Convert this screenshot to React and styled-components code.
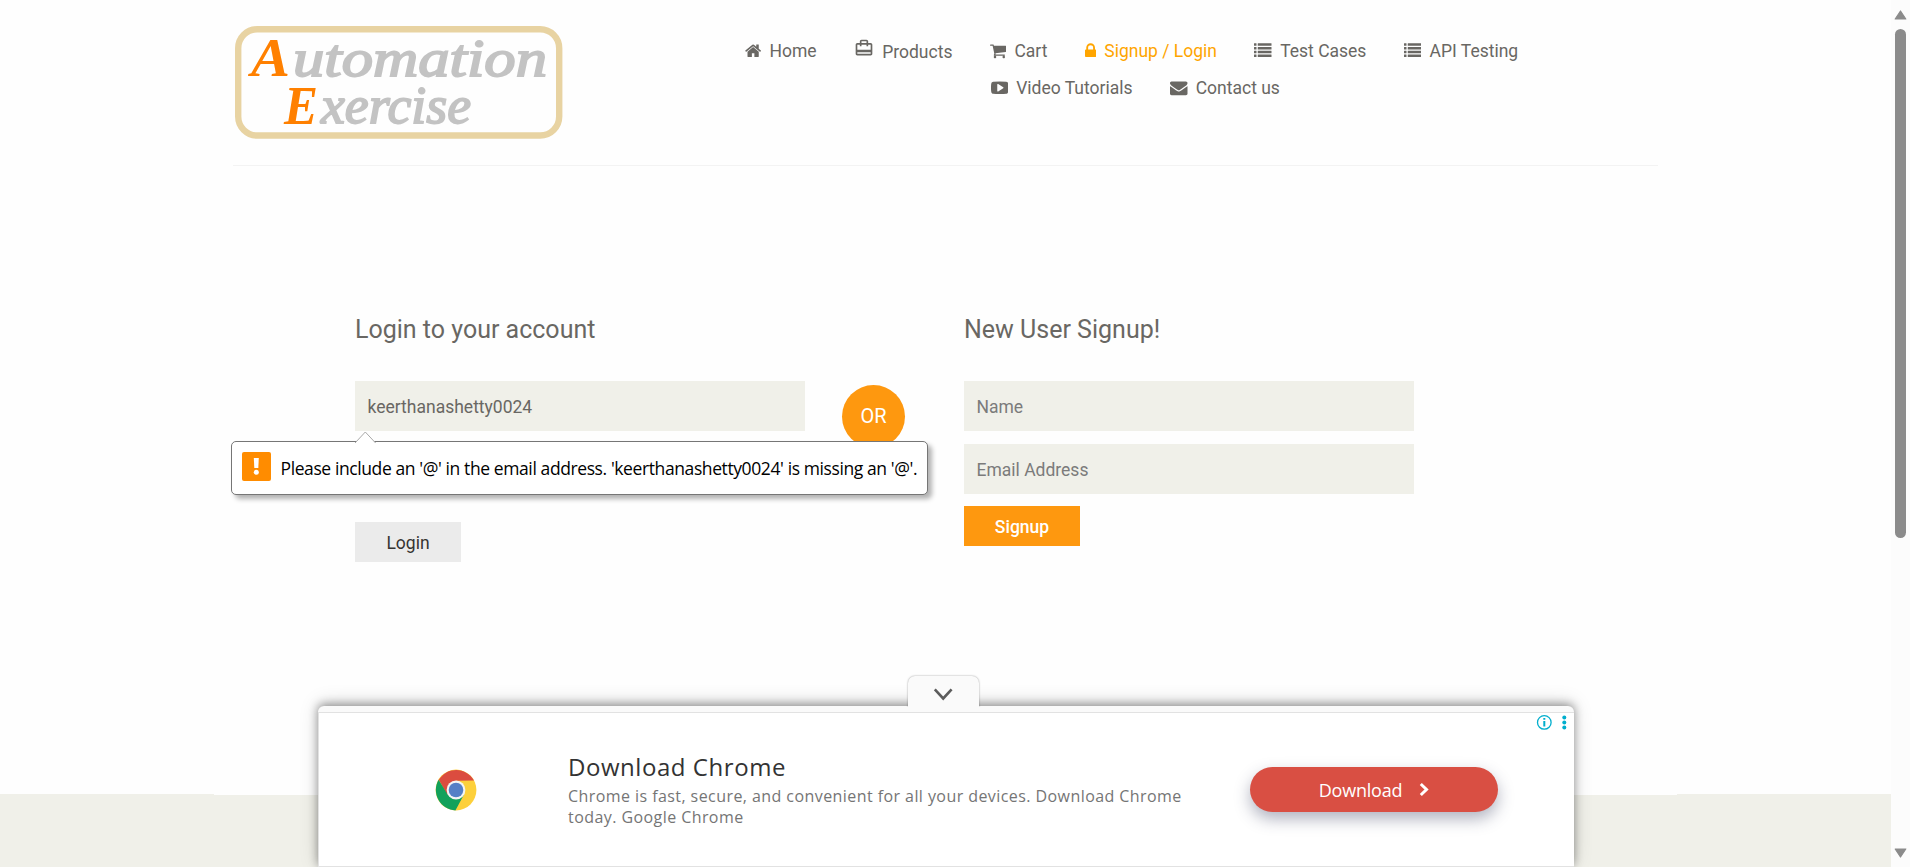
import React from "react";
import styled, { createGlobalStyle } from "styled-components";

const GlobalStyle = createGlobalStyle`
  *, *::before, *::after { box-sizing: border-box; }
  body {
    margin: 0;
    background: #fefefe;
    color: #696763;
    font-family: Roboto, "Liberation Sans", sans-serif;
    overflow: hidden;
  }
  h2, p, form { margin: 0; font-weight: 400; }
`;

const Viewport = styled.div`
  position: relative;
  display: flex;
  width: 1910px;
  height: 867px;
  overflow: hidden;
`;

const Page = styled.div`
  width: 1891px;
  height: 867px;
  display: flex;
  flex-direction: column;
`;

const Container = styled.div`
  width: 1463px;
  margin: 0 auto;
  padding: 0 19px;
`;

const HeaderRow = styled.header`
  display: flex;
  height: 166px;
  border-bottom: 1px solid #f3f3f3;
  padding-top: 26px;
`;

const Logo = styled.svg`
  flex: none;
  width: 328px;
  height: 113px;
  margin-left: 2px;
`;

const Nav = styled.nav`
  display: flex;
  flex-direction: column;
  gap: 12px;
  margin: 13px 0 0 182px;
`;

const NavRow = styled.div`
  display: flex;
  gap: 37.5px;
  height: 25px;
  margin-left: ${(p) => p.$indent || 0}px;
`;

const NavLink = styled.a`
  display: flex;
  gap: 8.2px;
  font-size: 17.5px;
  line-height: 25px;
  white-space: nowrap;
  color: ${(p) => (p.$active ? "#ffa500" : "#696763")};
  svg { flex: none; fill: currentColor; margin-top: 3px; height: 17.5px; }
`;

const CaseIcon = styled.svg`
  && { width: 20px; height: 20px; margin-top: -1px; }
`;

const LowText = styled.span`
  padding-top: 1px;
`;

const FormArea = styled.main`
  flex: 1;
  padding-top: 150px;
`;

const Columns = styled.div`
  display: flex;
  padding-left: 122px;
`;

const FormColumn = styled.form`
  width: 450px;
  display: flex;
  flex-direction: column;
  align-items: flex-start;
`;

const Title = styled.h2`
  font-size: 25px;
  line-height: 28px;
  height: 65px;
  white-space: nowrap;
`;

const Field = styled.div`
  width: 450px;
  height: 50px;
  margin-bottom: ${(p) => p.$after}px;
  padding: 0 12.5px;
  background: #f0f0e9;
  color: ${(p) => (p.$filled ? "#696763" : "#7b7b7b")};
  font-size: 17.5px;
  line-height: 52px;
`;

const Button = styled.button`
  width: ${(p) => p.$width}px;
  height: 40px;
  padding: 0;
  border: 0;
  font: ${(p) => (p.$primary ? 500 : 400)} 17.5px/42px Roboto, sans-serif;
  background: ${(p) => (p.$primary ? "#fe980f" : "#ebebeb")};
  color: ${(p) => (p.$primary ? "#fff" : "#363432")};
`;

const OrBadge = styled.div`
  width: 63px;
  height: 63px;
  margin: 69px 59px 0 37px;
  border-radius: 50%;
  background: #fe980f;
  color: #fff;
  font-size: 20px;
  font-weight: 400;
  line-height: 63px;
  text-align: center;
`;

const Footer = styled.footer`
  height: 73px;
  background: #f0f0e9;
`;

const FooterInner = styled(Container)`
  height: 73px;
  border-top: 1px solid #fefefe;
`;

const Tooltip = styled.div`
  position: absolute;
  left: 231px;
  top: 441px;
  width: 697px;
  height: 54px;
  display: flex;
  padding: 10px 0 0 10px;
  border: 1px solid #767676;
  border-radius: 5px;
  background: #fff;
  box-shadow: 4px 4px 5px rgba(0, 0, 0, 0.3);
`;

const TooltipArrow = styled.svg`
  position: absolute;
  left: 123px;
  top: -11px;
`;

const TooltipIcon = styled.svg`
  flex: none;
  width: 29px;
  height: 29px;
`;

const TooltipText = styled.span`
  margin: 4px 0 0 9.5px;
  font: 400 17.5px/25px "Open Sans", "Noto Sans", sans-serif;
  letter-spacing: -0.4px;
  white-space: nowrap;
  color: #000;
`;

const Ad = styled.aside`
  position: absolute;
  left: 318px;
  top: 706px;
  width: 1256px;
  height: 161px;
  border-radius: 6px 6px 0 0;
  background: #fafafa;
  padding-top: 6px;
  box-shadow: 0 -3px 20px rgba(0, 0, 0, 0.14), 0 -2px 10px rgba(0, 0, 0, 0.38);
  clip-path: inset(-40px -30px 0 -30px);
`;

const AdBody = styled.div`
  position: relative;
  display: flex;
  height: 155px;
  border: 1px solid #e2e2e2;
  border-right: 0;
  background: #fff;
`;

const AdHandle = styled.div`
  position: absolute;
  left: 908px;
  top: 676px;
  width: 71px;
  height: 31px;
  display: flex;
  justify-content: center;
  border-radius: 7px 7px 0 0;
  background: #fafafa;
  box-shadow: 0 0 2px rgba(0, 0, 0, 0.4);
  clip-path: inset(-5px -5px 0 -5px);
  svg { margin-top: 11px; }
`;

const ChromeLogo = styled.svg`
  flex: none;
  width: 42px;
  height: 42px;
  margin: 56px 0 0 115.5px;
`;

const AdCopy = styled.div`
  width: 640px;
  margin: 36.5px 0 0 91.5px;
  font-family: "Open Sans", "Noto Sans", sans-serif;
`;

const AdTitle = styled.h2`
  font-size: 24px;
  line-height: 34px;
  color: #333;
  letter-spacing: 0.55px;
`;

const AdText = styled.p`
  margin-top: 2.5px;
  font-size: 16px;
  line-height: 21px;
  letter-spacing: 0.43px;
  white-space: nowrap;
  color: #757575;
`;

const Download = styled.button`
  flex: none;
  width: 248px;
  height: 45px;
  margin: 54px 0 0 42px;
  padding: 0;
  border: 0;
  border-radius: 23px;
  background: #d94f43;
  color: #fff;
  display: flex;
  align-items: center;
  justify-content: center;
  gap: 17px;
  font: 400 18px/40px "Open Sans", "Noto Sans", sans-serif;
  letter-spacing: -0.2px;
  box-shadow: 0 7px 16px rgba(50, 55, 90, 0.38);
`;

const AdControls = styled.svg`
  position: absolute;
  right: 0;
  top: 0;
`;

const Scrollbar = styled.div`
  width: 19px;
  height: 867px;
  display: flex;
  flex-direction: column;
  align-items: center;
  background: #fcfcfc;
  padding: 10px 0 9px;
`;

const Thumb = styled.div`
  width: 11px;
  height: 509px;
  margin: 9px 0 auto;
  border-radius: 6px;
  background: #8b8b8b;
`;

const paths = {
  home: ["64 0 1664 1792", 16.25, "M1472 992v480q0 26-19 45t-45 19h-384v-384h-256v384h-384q-26 0-45-19t-19-45v-480q0-1 .5-3t.5-3l575-474 575 474q1 2 1 6zm223-69l-62 74q-8 9-21 11h-3q-13 0-21-7l-692-577-692 577q-12 8-24 7-13-2-21-11l-62-74q-8-10-7-23.5t11-21.5l719-599q32-26 76-26t76 26l244 204v-195q0-14 9-23t23-9h192q14 0 23 9t9 23v408l219 182q10 8 11 21.5t-7 23.5z"],
  cart: ["64 0 1664 1792", 16.25, "M704 1536q0 52-38 90t-90 38-90-38-38-90 38-90 90-38 90 38 38 90zm896 0q0 52-38 90t-90 38-90-38-38-90 38-90 90-38 90 38 38 90zm128-1088v512q0 24-16.5 42.5t-40.5 21.5l-1044 122q13 60 13 70 0 16-24 64h920q26 0 45 19t19 45-19 45-45 19h-1024q-26 0-45-19t-19-45q0-11 8-31.5t16-36 21.5-40 15.5-29.5l-177-823h-204q-26 0-45-19t-19-45 19-45 45-19h256q16 0 28.5 6.5t19.5 15.5 13 24.5 8 26 5.5 29.5 4.5 26h1201q26 0 45 19t19 45z"],
  lock: ["320 0 1152 1792", 11.25, "M640 768h512v-192q0-106-75-181t-181-75-181 75-75 181v192zm832 96v576q0 40-28 68t-68 28h-960q-40 0-68-28t-28-68v-576q0-40 28-68t68-28h32v-192q0-184 132-316t316-132 316 132 132 316v192h32q40 0 68 28t28 68z"],
  list: ["0 0 1792 1792", 17.5, [128, 512, 896, 1280].map((y) => `M32 ${y}h192q32 0 32 32v192q0 32-32 32h-192q-32 0-32-32v-192q0-32 32-32zM416 ${y}h1344q32 0 32 32v192q0 32-32 32h-1344q-32 0-32-32v-192q0-32 32-32z`).join("")],
  video: ["0 0 1792 1792", 17.5, "M1280 896q0-37-30-54l-512-320q-31-20-65-2-33 18-33 56v640q0 38 33 56 16 8 31 8 20 0 34-10l512-320q30-17 30-54zm512 0q0 96-1 150t-8.5 136.5-22.5 147.5q-16 73-69 123t-124 58q-222 25-671 25t-671-25q-71-8-124.5-58t-69.5-123q-14-65-21.5-147.5t-8.5-136.5-1-150 1-150 8.5-136.5 22.5-147.5q16-73 69-123t124-58q222-25 671-25t671 25q71 8 124.5 58t69.5 123q14 65 21.5 147.5t8.5 136.5 1 150z"],
  mail: ["0 0 1792 1792", 17.5, "M1792 710v794q0 66-47 113t-113 47h-1472q-66 0-113-47t-47-113v-794q44 49 101 87 362 246 497 345 57 42 92.5 65.5t94.5 48 110 24.5h2q51 0 110-24.5t94.5-48 92.5-65.5q170-123 498-345 57-39 100-87zm0-294q0 79-49 151t-122 123q-376 261-468 325-10 7-42.5 31t-54 38.5-52 32.5-57.5 27-50 9h-2q-23 0-50-9t-57.5-27-52-32.5-54-38.5-42.5-31q-91-64-262-182.5t-205-142.5q-62-42-117-115.5t-55-136.5q0-78 41.5-130t118.5-52h1472q65 0 112.5 47t47.5 113z"],
};

function Icon({ name }) {
  const [viewBox, width, d] = paths[name];
  return (
    <svg viewBox={viewBox} width={width} height="17.5">
      <path d={d} />
    </svg>
  );
}

function Item({ icon, active, children }) {
  return (
    <NavLink $active={active}>
      <Icon name={icon} />
      <span>{children}</span>
    </NavLink>
  );
}

function SiteLogo() {
  return (
    <Logo viewBox="0 0 328 113">
      <rect x="3.2" y="3.2" width="321" height="106.3" rx="19" fill="none" stroke="#e8d3a2" strokeWidth="6.4" />
      <g fontFamily="'Liberation Serif', serif" fontStyle="italic">
        <g fill="#ff8000" fontWeight="700" fontSize="54">
          <text x="16" y="50" textLength="39" lengthAdjust="spacingAndGlyphs">A</text>
          <text x="49" y="98" textLength="34" lengthAdjust="spacingAndGlyphs">E</text>
        </g>
        <g fill="#c3c3c3" stroke="#c3c3c3" strokeWidth="1.8" fontSize="52">
          <text x="58" y="50" textLength="254" lengthAdjust="spacingAndGlyphs">utomation</text>
          <text x="86" y="97" textLength="150" lengthAdjust="spacingAndGlyphs">xercise</text>
        </g>
      </g>
    </Logo>
  );
}

export default function App() {
  return (
    <Viewport>
      <GlobalStyle />
      <Page>
        <Container>
          <HeaderRow>
            <SiteLogo />
            <Nav>
              <NavRow>
                <Item icon="home">Home</Item>
                <NavLink>
                  <CaseIcon viewBox="0 0 24 24">
                    <path d="M20 6h-3V4c0-1.11-.89-2-2-2H9c-1.11 0-2 .89-2 2v2H4c-1.11 0-2 .89-2 2v11c0 1.11.89 2 2 2h16c1.11 0 2-.89 2-2V8c0-1.11-.89-2-2-2zM9 4h6v2H9V4zm11 15H4v-2h16v2zm0-5H4V8h3v2h2V8h6v2h2V8h3v6z" />
                  </CaseIcon>
                  <LowText>Products</LowText>
                </NavLink>
                <Item icon="cart">Cart</Item>
                <Item icon="lock" active>Signup / Login</Item>
                <Item icon="list">Test Cases</Item>
                <Item icon="list">API Testing</Item>
              </NavRow>
              <NavRow $indent={245.5}>
                <Item icon="video">Video Tutorials</Item>
                <Item icon="mail">Contact us</Item>
              </NavRow>
            </Nav>
          </HeaderRow>
        </Container>
        <FormArea>
          <Container>
            <Columns>
              <FormColumn>
                <Title>Login to your account</Title>
                <Field $filled $after={91}>keerthanashetty0024</Field>
                <Button type="button" $width={106}>Login</Button>
              </FormColumn>
              <OrBadge>OR</OrBadge>
              <FormColumn>
                <Title>New User Signup!</Title>
                <Field $after={13}>Name</Field>
                <Field $after={12}>Email Address</Field>
                <Button type="button" $primary $width={116}>Signup</Button>
              </FormColumn>
            </Columns>
          </Container>
        </FormArea>
        <Footer>
          <FooterInner />
        </Footer>
      </Page>
      <Scrollbar>
        <svg width="13" height="10" viewBox="0 0 13 10"><path d="M6.5 1 11.8 9H1.2Z" fill="#8b8b8b" stroke="#8b8b8b" strokeWidth="1.2" strokeLinejoin="round" /></svg>
        <Thumb />
        <svg width="13" height="10" viewBox="0 0 13 10"><path d="M6.5 9 11.8 1H1.2Z" fill="#8b8b8b" stroke="#8b8b8b" strokeWidth="1.2" strokeLinejoin="round" /></svg>
      </Scrollbar>

      <Tooltip>
        <TooltipArrow width="21" height="12" viewBox="0 0 21 12">
          <path d="M0 12 10.3 1 20.6 12" fill="#fff" stroke="#a8a8a8" />
        </TooltipArrow>
        <TooltipIcon viewBox="0 0 29 29">
          <rect width="29" height="29" rx="2" fill="#ff8c00" />
          <path d="M11.8 6h5l-.5 10h-4z" fill="#fff" />
          <circle cx="14.3" cy="20.3" r="2.5" fill="#fff" />
        </TooltipIcon>
        <TooltipText>Please include an '@' in the email address. 'keerthanashetty0024' is missing an '@'.</TooltipText>
      </Tooltip>

      <Ad>
        <AdBody>
          <ChromeLogo viewBox="-21 -21 42 42">
            <circle r="20.4" fill="#fdd03b" />
            <path d="M-17.2-10.2A20.4 20.4 0 0 1 18-9.6L0-9.3-8.6 5Z" fill="#db4c3f" />
            <path d="M-17.4-10.2A20.4 20.4 0 0 0-.6 20.4L8 4.6-8.4 4.6Z" fill="#12a15b" />
            <circle r="9.4" fill="#f4f4f4" />
            <circle r="7.3" fill="#557fc6" />
          </ChromeLogo>
          <AdCopy>
            <AdTitle>Download Chrome</AdTitle>
            <AdText>
              Chrome is fast, secure, and convenient for all your devices. Download Chrome
              <br />
              today. Google Chrome
            </AdText>
          </AdCopy>
          <Download type="button">
            <span>Download</span>
            <svg width="10" height="15" viewBox="0 0 10 15"><path d="M1.8 2 7.5 7.5 1.8 13" fill="none" stroke="#fff" strokeWidth="3" /></svg>
          </Download>
          <AdControls width="40" height="20" viewBox="0 0 40 20">
            <circle cx="10.3" cy="9.4" r="6.8" fill="none" stroke="#00aecd" strokeWidth="1.3" />
            <path d="M9.3 8h2v5.6h-2zM9.3 5h2v1.8h-2z" fill="#00aecd" />
            <g fill="#00aecd">
              <circle cx="30.3" cy="4.4" r="2" />
              <circle cx="30.3" cy="9.4" r="2" />
              <circle cx="30.3" cy="14.4" r="2" />
            </g>
          </AdControls>
        </AdBody>
      </Ad>
      <AdHandle>
        <svg width="21" height="15" viewBox="0 0 21 15"><path d="M1.8 2.3 10.2 11.5 18.6 2.3" fill="none" stroke="#5c5c5c" strokeWidth="2.6" /></svg>
      </AdHandle>
    </Viewport>
  );
}
